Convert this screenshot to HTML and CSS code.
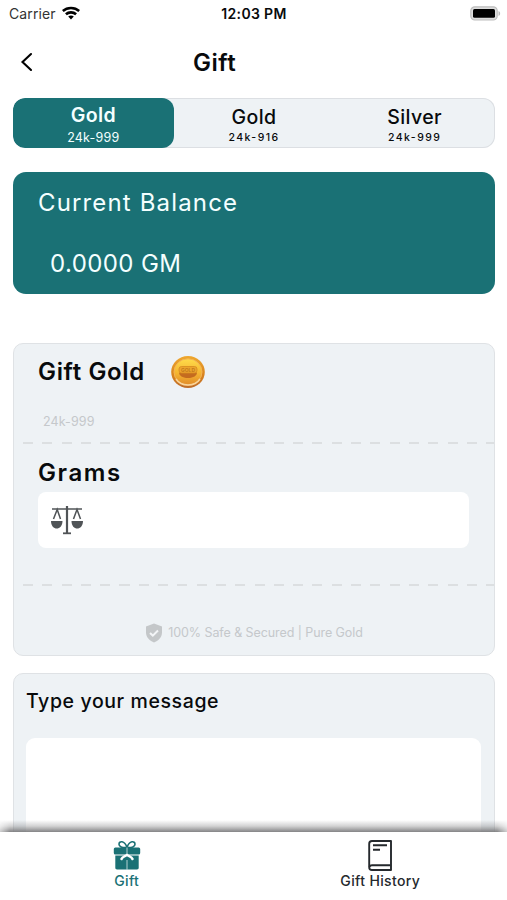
FILE: index.html
```html
<!DOCTYPE html>
<html lang="en">
<head>
<meta charset="utf-8">
<title>Gift</title>
<link rel="stylesheet" href="styles.css">
</head>
<body>
<div class="screen">
  <div class="status">
    <div class="carrier"><span>Carrier</span>
      <svg class="wifi" width="18" height="14" viewBox="0 0 18 14" fill="none" stroke="#000" stroke-width="2.6"><path d="M.8 5C5.300.9 12.700.9 17.200 5"/><path d="M3.900 8.300c2.900-2.600 7.300-2.600 10.200 0"/><path d="M6.200 10.600c1.600-1.400 4-1.400 5.600 0L9 13.600z" fill="#000" stroke="none"/></svg>
    </div>
    <span class="time">12:03 PM</span>
    <svg class="battery" width="31" height="15" viewBox="0 0 31 15"><rect x=".8" y=".8" width="26.4" height="13.2" rx="4" fill="#ddd" stroke="#bdbdbd" stroke-width="1.2"/><rect x="3" y="3" width="22" height="8.8" rx="1.5" fill="#000"/><path d="M28.5 5v5c2.2-.8 2.2-4.2 0-5z" fill="#b9b9b9"/></svg>
  </div>
  <header class="header">
    <svg class="back" width="14" height="20" viewBox="0 0 14 20" fill="none" stroke="#000" stroke-width="2.1" stroke-linecap="round"><path d="M11 2 2.500 10 11 18"/></svg>
    <h1 class="title">Gift</h1>
  </header>
  <nav class="tabs">
    <div class="tab active"><span class="name">Gold</span><span class="purity">24k-999</span></div>
    <div class="tab"><span class="name">Gold</span><span class="purity">24k-916</span></div>
    <div class="tab"><span class="name">Silver</span><span class="purity">24k-999</span></div>
  </nav>
  <section class="balance">
    <div class="balance-label">Current Balance</div>
    <div class="balance-value">0.0000 GM</div>
  </section>
  <section class="card gift-card">
    <div class="gift-head"><h2 class="gift-title">Gift Gold</h2>
      <svg width="34" height="34" viewBox="0 0 34 34">
        <defs><linearGradient id="rim" x1="0" y1="0" x2="0" y2="1"><stop offset="0" stop-color="#efa82e"/><stop offset=".6" stop-color="#d8831f"/><stop offset="1" stop-color="#bd6b28"/></linearGradient>
        <linearGradient id="face" x1="0" y1="0" x2="0" y2="1"><stop offset="0" stop-color="#ffdc4a"/><stop offset=".55" stop-color="#f4b431"/><stop offset="1" stop-color="#e08a28"/></linearGradient></defs>
        <ellipse cx="17" cy="17" rx="16.8" ry="16" fill="url(#rim)"/>
        <ellipse cx="17" cy="17" rx="14" ry="13.2" fill="url(#face)" stroke="#f3b456"/>
        <path d="M8 17.500h18c0 3-3.500 5.500-9 5.500s-9-2.500-9-5.500z" fill="#b95b1c" opacity=".8"/>
        <rect x="8" y="11.500" width="18" height="6.500" rx="2.500" fill="#eda52d" stroke="#d58a20" stroke-width=".8"/>
        <text class="coin-text" x="17" y="16.600" text-anchor="middle">GOLD</text>
        <path d="M5 24c5 8 19 8 24 0" fill="none" stroke="#f9d49a" stroke-width="1.500"/>
      </svg>
    </div>
    <div class="gift-purity">24k-999</div>
    <div class="dash"></div>
    <h2 class="grams">Grams</h2>
    <div class="field">
      <svg width="32" height="30" viewBox="0 0 32 30" fill="none" stroke="#505457" stroke-width="1.500"><path d="M1 4h30"/><path d="M16 1v27" stroke-width="2.200"/><path d="M12 28.300h8" stroke-width="1.800"/><path d="M2.500 14 6.200 4.500 9.500 14M22.500 14 26 4.500 29.500 14"/><path d="M0 16h11.500c0 10-11.500 10-11.500 0zM20.500 16H32c0 10-11.500 10-11.500 0z" fill="#505457" stroke="none"/></svg>
    </div>
    <div class="dash second"></div>
    <div class="secure">
      <svg width="18" height="20" viewBox="0 0 18 20"><path d="M9 .5 17 3.500v6c0 5-4 8.500-8 10-4-1.500-8-5-8-10v-6z" fill="#c4c7c9"/><path d="m5 10 2.800 2.600L13 7.500" fill="none" stroke="#f3f5f7" stroke-width="2"/></svg>
      <span>100% Safe &amp; Secured | Pure Gold</span>
    </div>
  </section>
  <section class="card message-card">
    <div class="message-label">Type your message</div>
    <div class="message-box"></div>
  </section>
  <footer class="bottom">
    <div class="item current">
      <svg width="28" height="31" viewBox="0 0 28 31"><g fill="none" stroke="#1a7175" stroke-width="1.600"><path d="M14 7.500C9 8 6 6.500 6 4.200 6 .8 11.500.2 14 7.500z"/><path d="M14 7.500c5 .5 8-1 8-3.300 0-3.400-5.500-4-8 3.300z"/></g><rect x=".8" y="7.500" width="26.400" height="7" rx="1.500" fill="#1a7175"/><path d="M2.300 15.500h23.400v12.300c0 1-.7 1.700-1.700 1.700H4c-1 0-1.700-.7-1.700-1.700z" fill="#1a7175"/><path d="M14 7.500v7M14 20v10" stroke="#c5dedf" stroke-width=".9"/><path d="M8.500 19c.8-2.500 3-2.500 5.500-4 2.500 1.500 4.700 1.500 5.500 4" fill="none" stroke="#fff" stroke-width="2.500" stroke-linecap="round"/></svg>
      <span>Gift</span>
    </div>
    <div class="item">
      <svg width="24" height="31" viewBox="0 0 24 31" fill="none" stroke="#25292d" stroke-width="1.900"><path d="M23 1H4C2.200 1 1.200 2 1.200 3.800v23.400C1.200 29 2.200 30 4 30h19z" stroke-linejoin="round"/><path d="M1.500 27c.3-1.200 1-1.700 2.500-1.700h18.500M5 5.200h14M5 9.800h7"/></svg>
      <span>Gift History</span>
    </div>
  </footer>
</div>
</body>
</html>
```
FILE: styles.css
```css
* { box-sizing: border-box; }
body { margin: 0; background: #fff; color: #080a0c; font-family: Inter, "Liberation Sans", sans-serif; }
h1, h2 { margin: 0; font-weight: 600; }
svg { display: block; flex: none; }
.screen { width: 507px; height: 900px; overflow: hidden; display: flex; flex-direction: column; }

.status { height: 28px; flex: none; display: grid; grid-template-columns: 1fr auto 1fr; align-items: center; padding: 0 6px 0 9px; font-size: 14px; line-height: 28px; }
.carrier { display: flex; align-items: center; gap: 6px; color: #333; letter-spacing: 0.1px; }
.wifi { margin-top: -2px; }
.time { margin-left: -2px; font-weight: 600; letter-spacing: 0.35px; }
.battery { justify-self: end; margin-top: -2px; }

.header { height: 70px; flex: none; display: flex; align-items: center; padding: 0 20px 1px; }
.back { margin-top: -2px; }
.title { margin-left: 159px; font-size: 24px; line-height: 36px; letter-spacing: 0.5px; }

.tabs { height: 50px; flex: none; margin: 0 12px 0 13px; display: grid; grid-template-columns: repeat(3, 1fr); border-radius: 12px; background: #eef2f5; box-shadow: inset 0 0 0 1px #dcdfe3; overflow: hidden; }
.tab { display: flex; flex-direction: column; align-items: center; padding-top: 5px; }
.name { font-size: 19.5px; line-height: 28px; font-weight: 500; letter-spacing: 0.4px; }
.purity { font-size: 10.5px; line-height: 14px; letter-spacing: 1.45px; font-weight: 500; }
.active { background: #1a7175; color: #f4ffff; border-radius: 12px; padding-top: 3px; }
.active .name { font-weight: 600; }
.active .purity { font-size: 12.5px; line-height: 17px; letter-spacing: 0.2px; font-weight: 400; }

.balance { height: 122px; flex: none; margin: 24px 12px 0 13px; padding: 13px 25px; border-radius: 13px; background: #1a7175; color: #f4ffff; font-size: 24px; line-height: 36px; }
.balance-label { letter-spacing: 1.15px; }
.balance-value { margin: 25px 0 0 12px; letter-spacing: 0.4px; }

.card { flex: none; margin: 0 12px 0 13px; border: 1.5px solid #dfe2e5; border-radius: 10px; background: #eef2f5; }
.gift-card { height: 313px; margin-top: 49px; }
.gift-head { display: flex; align-items: center; gap: 26px; padding: 9px 0 0 24px; height: 47px; }
.gift-title { width: 107px; font-size: 24px; line-height: 36px; letter-spacing: 0.65px; white-space: nowrap; }
.gift-purity { margin: 22px 0 0 29px; font-size: 12.5px; line-height: 17px; color: #c5c8cb; letter-spacing: 0.1px; }
.dash { margin: 12px 0 0 9px; height: 2px; background: repeating-linear-gradient(90deg, #dcdfe1 0 10px, transparent 10px 19.3px); }
.grams { margin: 11px 0 0 24px; font-size: 24px; line-height: 36px; letter-spacing: 1.6px; }
.field { height: 56px; margin: 1px 25px 0 24px; padding-left: 13px; display: flex; align-items: center; background: #fff; border-radius: 8px; }
.second { margin-top: 36px; }
.secure { margin-top: 37px; display: flex; justify-content: center; align-items: center; gap: 5px; font-size: 12.5px; line-height: 20px; letter-spacing: -0.08px; color: #c5c8cb; }

.message-card { height: 240px; margin-top: 17px; padding: 13px 13px 0 12px; }
.message-label { font-size: 19.5px; line-height: 28px; font-weight: 500; letter-spacing: 0.6px; }
.message-box { margin-top: 23px; height: 140px; background: #fff; border-radius: 9px; }

.bottom { position: fixed; left: 0; bottom: 0; width: 507px; height: 68px; padding-top: 8px; background: #fff; display: grid; grid-template-columns: 1fr 1fr; font-size: 14px; font-weight: 500; line-height: 20px; letter-spacing: 0.35px; color: #25292d; }
.bottom::before { content: ""; position: absolute; left: 0; right: 0; top: -12px; height: 12px; background: linear-gradient(rgba(110,110,112,0), rgba(110,110,112,.3) 50%, rgba(110,110,112,.85)); mask-image: linear-gradient(90deg, rgba(0,0,0,.4), #000 10px, #000 497px, rgba(0,0,0,.4)); }
.item { display: flex; flex-direction: column; align-items: center; }
.current { color: #1a7175; }
.coin-text { font-size: 5px; font-weight: 700; fill: #c47c1d; letter-spacing: 0; }
```
